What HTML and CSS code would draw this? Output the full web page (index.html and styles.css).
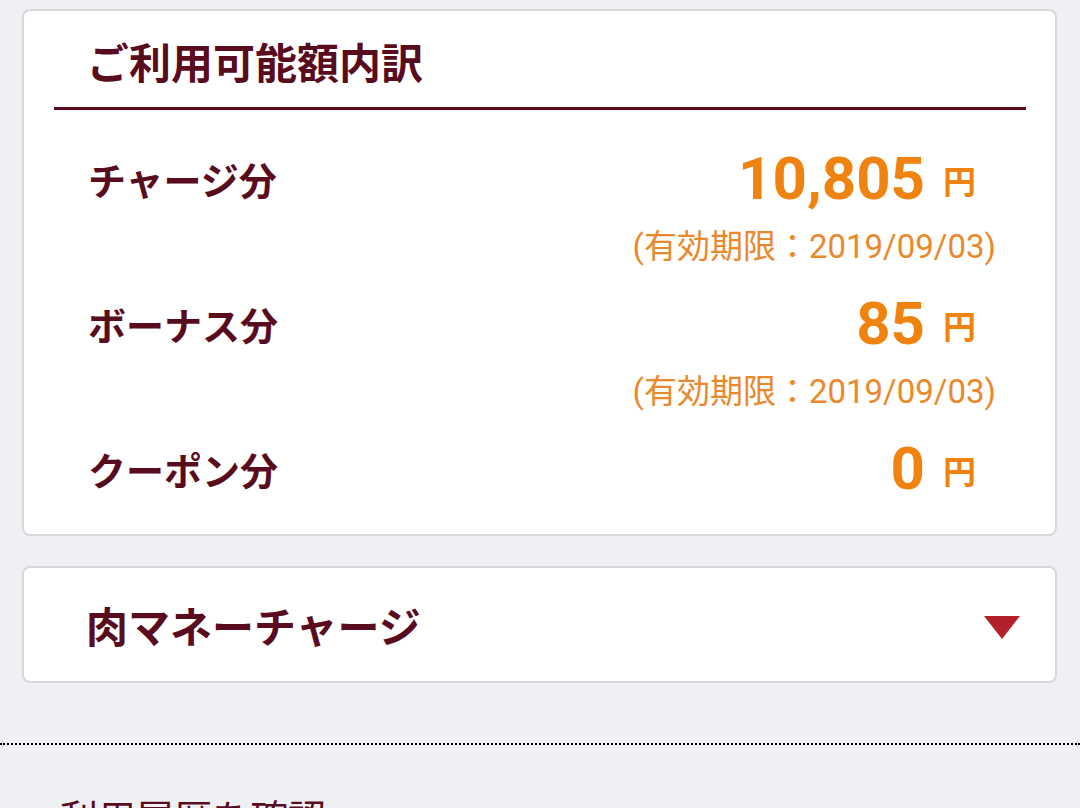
FILE: index.html
```html
<!DOCTYPE html>
<html lang="ja">
  <head>
    <meta charset="UTF-8" />
    <title>ご利用可能額内訳</title>
    <link rel="stylesheet" href="styles.css">
  </head>
  <body>
    <div id="container">
      <!-- 内訳カード -->
      <div class="card breakdown">
        <h2 class="card-title">ご利用可能額内訳</h2>
        <div class="breakdown-body">
          <div class="row">
            <span class="row-label">チャージ分</span>
            <span class="amount"><span class="amount-num">10,805</span><span class="yen">円</span></span>
          </div>
          <div class="expiry">(有効期限：2019/09/03)</div>
          <div class="row">
            <span class="row-label">ボーナス分</span>
            <span class="amount"><span class="amount-num">85</span><span class="yen">円</span></span>
          </div>
          <div class="expiry">(有効期限：2019/09/03)</div>
          <div class="row">
            <span class="row-label">クーポン分</span>
            <span class="amount"><span class="amount-num">0</span><span class="yen">円</span></span>
          </div>
        </div>
      </div>

      <!-- チャージ (開閉) -->
      <div class="card accordion">
        <span class="accordion-title">肉マネーチャージ</span>
        <span class="arrow"></span>
      </div>

      <div class="history">
        <span class="history-link">利用履歴を確認</span>
      </div>
    </div>
  </body>
</html>
```

FILE: styles.css
```css
html {
  height: 100%;
}
body {
  margin: 0;
  background-color: #eff0f4;
  font-family: "Roboto", "Noto Sans CJK JP", sans-serif;
  color: #5a0c1f;
  overflow: hidden;
}
#container {
  padding-top: 9px;
}

.card {
  margin: 0 23px 0 22px;
  background: #fff;
  border: 2px solid #d6d8dc;
  border-radius: 8px;
}

.card-title {
  margin: 0 29px 0 30px;
  padding: 26px 0 14px 33px;
  font-size: 42px;
  line-height: 56px;
  font-weight: bold;
  border-bottom: 3px solid #5a0c1f;
}

.breakdown-body {
  padding: 33px 59px 31px 64px;
}

.row {
  display: flex;
  justify-content: space-between;
  align-items: center;
  height: 70px;
}
.row + .row,
.expiry + .row {
  margin-top: 21px;
}

.row-label {
  font-size: 38px;
  font-weight: bold;
}

.amount {
  display: flex;
  align-items: center;
  margin-right: 20px;
  color: #f0820f;
  font-weight: bold;
}
.amount-num {
  font-size: 60px;
}
.yen {
  font-size: 33px;
  margin-left: 18px;
  margin-top: 4px;
}

.expiry {
  margin-top: 14px;
  height: 40px;
  line-height: 40px;
  text-align: right;
  font-size: 33px;
  color: #e9892c;
}

.accordion {
  margin-top: 30px;
  height: 113px;
  display: flex;
  align-items: center;
  justify-content: space-between;
  padding: 0 35px 0 62px;
}
.accordion-title {
  font-size: 42px;
  font-weight: bold;
}
/* 下向きの三角 */
.arrow {
  width: 0;
  height: 0;
  border-left: 18px solid transparent;
  border-right: 18px solid transparent;
  border-top: 23px solid #b3202a;
  margin-top: 6px;
}

.history {
  margin-top: 60px;
  border-top: 2px dotted #000;
  padding: 46px 0 0 60px;
}
.history-link {
  font-size: 38px;
  line-height: 56px;
}
```
